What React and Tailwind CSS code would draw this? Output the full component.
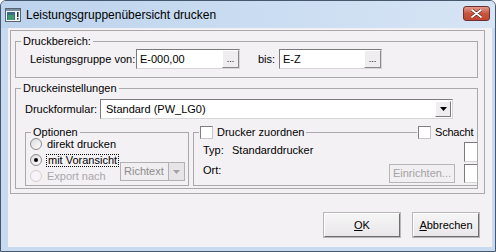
import React from 'react'

function Checkbox() {
  return (
    <span className="block w-[13px] h-[13px] border border-t-[#7f7d7f] border-l-[#7f7d7f] border-b-[#c9c6c9] border-r-[#c9c6c9] bg-white" />
  )
}

function Radio({ checked, disabled }) {
  return (
    <span
      className={`flex items-center justify-center w-[12px] h-[12px] rounded-full border ${
        disabled ? 'border-[#d2cfd2] bg-[#f6f4f6]' : 'border-[#8c8a8c] bg-gradient-to-br from-[#dcdadc] to-white'
      }`}
    >
      {checked && <span className="block w-[4px] h-[4px] rounded-full bg-black" />}
    </span>
  )
}

function DotsInput({ value, width }) {
  return (
    <div className={`flex h-[20px] ${width} border border-t-[#7c7a7c] border-l-[#7c7a7c] border-b-[#d8d5d8] border-r-[#d8d5d8] bg-white`}>
      <span className="flex-1 pl-[3px] leading-[18px]">{value}</span>
      <button className="w-[17px] h-full border border-t-white border-l-white border-b-[#8a888a] border-r-[#8a888a] bg-[#efedef] text-[9px] leading-[14px] text-black">
        ...
      </button>
    </div>
  )
}

function DropArrow({ disabled }) {
  return (
    <svg width="7" height="4" viewBox="0 0 7 4">
      <path d="M0 0h7L3.5 4z" fill={disabled ? '#a3a1a3' : '#000'} />
    </svg>
  )
}

export default function App() {
  return (
    <div className="w-[496px] h-[252px] flex flex-col bg-[#c7daf0] border border-[#46586e] rounded-t-[6px] overflow-hidden font-['Liberation_Sans',Arial,sans-serif] text-[11px] text-black">
      {/* Title bar */}
      <div className="h-[27px] flex items-center pl-[4px] pr-[4px] bg-gradient-to-r from-[#bdd3ed] via-[#c9dcf1] to-[#d7e5f5]">
        <svg width="16" height="16" viewBox="0 0 16 16" className="mt-[1px]">
          <rect x="0.5" y="1.5" width="15" height="13" fill="#f4f4f4" stroke="#59636e" />
          <rect x="1" y="2" width="14" height="2" fill="#7f8fa3" />
          <rect x="2" y="5" width="8" height="8" fill="#3f6a84" />
          <rect x="3" y="8" width="6" height="5" fill="#3f9a74" />
          <rect x="12" y="5" width="1.5" height="5" fill="#2b2b2b" />
          <rect x="12" y="11" width="1.5" height="1.5" fill="#2b2b2b" />
        </svg>
        <span className="ml-[5px] text-[12px] leading-[16px] text-black">Leistungsgruppenübersicht drucken</span>
        <div className="flex-1" />
        <div className="w-[27px] h-[15px] mb-[2px] mr-[1px] rounded-[3px] border border-[#6e3030] bg-gradient-to-b from-[#e19b8c] via-[#c8553f] to-[#c2462f] flex items-center justify-center">
          <svg width="11" height="9" viewBox="0 0 11 9">
            <path d="M1 1l9 7M10 1L1 8" stroke="#5a1f16" strokeWidth="3" strokeLinecap="round" />
            <path d="M1 1l9 7M10 1L1 8" stroke="#fff" strokeWidth="1.8" strokeLinecap="round" />
          </svg>
        </div>
      </div>

      {/* Client area */}
      <div className="flex-1 ml-[7px] mr-[3px] mb-[4px] flex flex-col bg-[#f4f1f4] pt-[2px] pl-[2px]">
        {/* Outer panel */}
        <div className="w-[475px] h-[164px] border border-[#aba8ab] pl-[4px] pt-[10px] flex flex-col">
          {/* Druckbereich */}
          <div className="w-[463px] h-[37px] border border-[#aba8ab] flex flex-col">
            <div className="-mt-[7px] ml-[5px] px-[2px] w-fit h-[13px] leading-[13px] bg-[#f4f1f4]">Druckbereich:</div>
            <div className="mt-[1px] pl-[14px] flex items-center">
              <span className="w-[106px]">Leistungsgruppe von:</span>
              <DotsInput value="E-000,00" width="w-[104px]" />
              <span className="ml-[18px] w-[21px]">bis:</span>
              <DotsInput value="E-Z" width="w-[103px]" />
            </div>
          </div>

          {/* Druckeinstellungen */}
          <div className="mt-[10px] w-[463px] h-[101px] border border-[#aba8ab] flex flex-col">
            <div className="-mt-[7px] ml-[5px] px-[2px] w-fit h-[13px] leading-[13px] bg-[#f4f1f4]">Druckeinstellungen</div>
            <div className="mt-[4px] pl-[9px] flex items-center">
              <span className="w-[75px]">Druckformular:</span>
              <div className="w-[353px] h-[20px] border border-t-[#7c7a7c] border-l-[#7c7a7c] border-b-[#d8d5d8] border-r-[#d8d5d8] bg-white flex items-center">
                <span className="flex-1 pl-[5px]">Standard (PW_LG0)</span>
                <span className="w-[16px] h-[16px] mr-[1px] border border-t-white border-l-white border-b-[#7c7a7c] border-r-[#7c7a7c] bg-[#efedef] flex items-center justify-center">
                  <DropArrow />
                </span>
              </div>
            </div>

            <div className="mt-[6px] pl-[9px] flex gap-[4px] overflow-hidden">
              {/* Optionen */}
              <div className="mt-[7px] w-[164px] h-[54px] shrink-0 border border-[#aba8ab] flex flex-col">
                <div className="-mt-[7px] ml-[5px] px-[2px] w-fit h-[13px] leading-[13px] bg-[#f4f1f4]">Optionen</div>
                <div className="-mt-[3px] pl-[4px] flex">
                  <div className="w-[90px] flex flex-col">
                    <div className="h-[16px] flex items-center gap-[5px]">
                      <Radio />
                      <span>direkt drucken</span>
                    </div>
                    <div className="h-[16px] flex items-center gap-[4px]">
                      <Radio checked />
                      <span className="px-[1px] leading-[11px] border border-dotted border-black">mit Voransicht</span>
                    </div>
                    <div className="h-[16px] flex items-center gap-[5px] text-[#a9a6a9]">
                      <Radio disabled />
                      <span>Export nach</span>
                    </div>
                  </div>
                  <div className="self-end mb-[3px] w-[65px] h-[19px] border border-[#b3b0b3] bg-[#f0eef0] flex items-center">
                    <span className="flex-1 pl-[3px] text-[#8d8b8d]">Richtext</span>
                    <span className="w-[16px] h-full border-l border-[#b3b0b3] bg-[#e6e4e6] flex items-center justify-center">
                      <DropArrow disabled />
                    </span>
                  </div>
                </div>
              </div>

              {/* Drucker zuordnen */}
              <div className="mt-[7px] w-[300px] h-[54px] shrink-0 border border-[#aba8ab] flex flex-col">
                <div className="-mt-[7px] h-[13px] flex items-center">
                  <div className="ml-[5px] pl-[1px] pr-[2px] flex items-center gap-[4px] bg-[#f4f1f4]">
                    <Checkbox />
                    <span className="leading-[13px]">Drucker zuordnen</span>
                  </div>
                  <div className="flex-1" />
                  <div className="w-[75px] pl-[1px] flex items-center gap-[4px] bg-[#f4f1f4]">
                    <Checkbox />
                    <span className="leading-[13px] tracking-[-0.2px]">Schacht</span>
                  </div>
                </div>
                <div className="mt-[3px] pl-[9px] pr-[6px] flex flex-col gap-[2px]">
                  <div className="h-[20px] flex items-start">
                    <span className="w-[29px] leading-[16px]">Typ:</span>
                    <span className="flex-1 leading-[16px]">Standarddrucker</span>
                    <span className="w-[22px] h-[20px] border border-t-[#7c7a7c] border-l-[#7c7a7c] border-b-[#d8d5d8] border-r-[#d8d5d8] bg-white" />
                  </div>
                  <div className="h-[19px] flex items-center">
                    <span className="flex-1 -mt-[7px]">Ort:</span>
                    <button className="w-[66px] h-[19px] border border-[#b8b5b8] bg-[#f1eff1] text-[#a3a1a3] leading-[17px]">
                      Einrichten...
                    </button>
                    <span className="ml-[9px] w-[22px] h-[19px] border border-t-[#7c7a7c] border-l-[#7c7a7c] border-b-[#d8d5d8] border-r-[#d8d5d8] bg-white" />
                  </div>
                </div>
              </div>
            </div>
          </div>
        </div>

        {/* Buttons */}
        <div className="mt-[19px] pl-[314px] flex gap-[13px]">
          <button className="w-[76px] h-[24px] border border-t-white border-l-white border-b-[#6f6d6f] border-r-[#6f6d6f] bg-gradient-to-b from-[#f6f5f6] to-[#e9e7e9] shadow-[0_0_0_1px_#b9b6b9]">
            <span className="underline">O</span>K
          </button>
          <button className="w-[66px] h-[24px] border border-t-white border-l-white border-b-[#6f6d6f] border-r-[#6f6d6f] bg-gradient-to-b from-[#f6f5f6] to-[#e9e7e9] shadow-[0_0_0_1px_#b9b6b9]">
            <span className="underline">A</span>bbrechen
          </button>
        </div>
      </div>
    </div>
  )
}
